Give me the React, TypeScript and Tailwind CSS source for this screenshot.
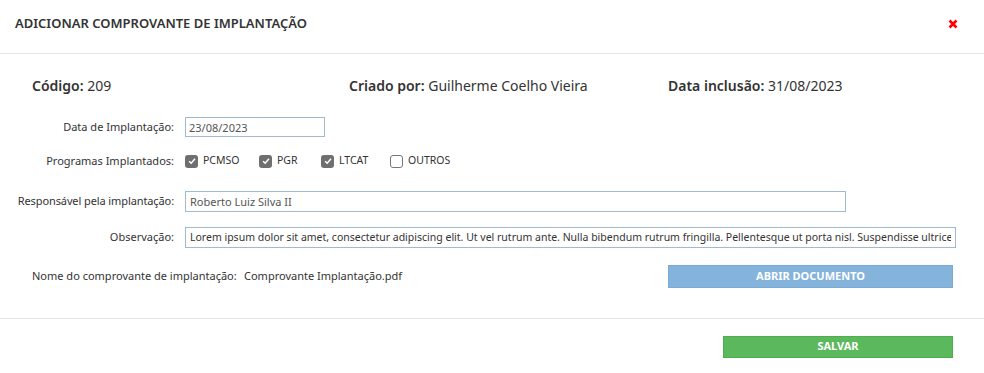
import { useState } from 'react';

const font = { fontFamily: '"Noto Sans", "DejaVu Sans", sans-serif' };

type CheckProps = { label: string; checked: boolean; width: string; onToggle: () => void };

const Check = ({ label, checked, width, onToggle }: CheckProps) => (
  <button type="button" onClick={onToggle} className={`flex items-center gap-[5px] ${width}`}>
    <span
      className={`flex h-[13px] w-[13px] items-center justify-center rounded-[3px] ${
        checked ? 'bg-[#6f6f6f]' : 'border border-[#777] bg-white'
      }`}
    >
      {checked && (
        <svg viewBox="0 0 12 12" className="h-[10px] w-[10px]">
          <path d="M2.5 6.2 L5 8.6 L9.6 3.4" fill="none" stroke="white" strokeWidth="1.8" />
        </svg>
      )}
    </span>
    <span className="text-[10.5px] text-[#333]">{label}</span>
  </button>
);

// fixed slot widths so the boxes line up like the original form
const slots = {
  PCMSO: 'w-[74px]',
  PGR: 'w-[62px]',
  LTCAT: 'w-[69px]',
  OUTROS: 'w-[70px]',
};

const App = () => {
  const [programs, setPrograms] = useState({
    PCMSO: true,
    PGR: true,
    LTCAT: true,
    OUTROS: false,
  });

  const toggle = (key: keyof typeof programs) =>
    setPrograms((p) => ({ ...p, [key]: !p[key] }));

  return (
    <div className="h-[373px] w-[984px] bg-white text-[#333]" style={font}>
      {/* Header */}
      <div className="flex h-[54px] items-start justify-between border-b border-[#e5e5e5] pl-[15px] pr-[26px] pt-[15px]">
        <h1 className="text-[13px] font-semibold leading-[16px] text-[#333]">
          ADICIONAR COMPROVANTE DE IMPLANTAÇÃO
        </h1>
        <button type="button" className="mt-[4px] text-[#f00]">
          <svg viewBox="0 0 10 10" className="h-[10px] w-[10px]">
            <path d="M1.5 1.5 L8.5 8.5 M8.5 1.5 L1.5 8.5" stroke="currentColor" strokeWidth="2.6" />
          </svg>
        </button>
      </div>

      {/* Body */}
      <div className="border-b border-[#e5e5e5] pb-[30px]">
        <div className="flex h-[63px] items-center pl-[32px] text-[14px]">
          <div className="w-[317px]">
            <span className="font-semibold">Código:</span> 209
          </div>
          <div className="w-[319px]">
            <span className="font-semibold">Criado por:</span> Guilherme Coelho Vieira
          </div>
          <div>
            <span className="font-semibold">Data inclusão:</span> 31/08/2023
          </div>
        </div>

        <div className="flex flex-col text-[11px]">
          <div className="flex items-center">
            <label className="w-[175px] pr-[1px] text-right">Data de Implantação:</label>
            <input
              defaultValue="23/08/2023"
              className="ml-[10px] h-[20px] w-[140px] border border-[#9fbad1] px-[3px] text-[11px] text-[#555] outline-none"
            />
          </div>

          <div className="mt-[16px] flex items-center">
            <label className="w-[175px] pr-[1px] text-right">Programas Implantados:</label>
            <div className="ml-[10px] flex items-center">
              {(Object.keys(programs) as (keyof typeof programs)[]).map((key) => (
                <Check
                  key={key}
                  label={key}
                  width={slots[key]}
                  checked={programs[key]}
                  onToggle={() => toggle(key)}
                />
              ))}
            </div>
          </div>

          <div className="mt-[21px] flex items-center">
            <label className="w-[175px] pr-[1px] text-right tracking-[-0.1px]">
              Responsável pela implantação:
            </label>
            <input
              defaultValue="Roberto Luiz Silva II"
              className="ml-[10px] h-[21px] w-[661px] border border-[#9fbad1] px-[4px] text-[11px] text-[#555] outline-none"
            />
          </div>

          <div className="mt-[15px] flex items-center">
            <label className="w-[175px] pr-[1px] text-right">Observação:</label>
            <input
              defaultValue="Lorem ipsum dolor sit amet, consectetur adipiscing elit. Ut vel rutrum ante. Nulla bibendum rutrum fringilla. Pellentesque ut porta nisl. Suspendisse ultrices"
              className="ml-[10px] h-[21px] w-[771px] border border-[#9fbad1] px-[4px] text-[10.5px] text-[#333] outline-none"
            />
          </div>

          <div className="mt-[17px] flex items-center pl-[32px]">
            <span className="w-[212px]">Nome do comprovante de implantação:</span>
            <span className="w-[424px]">Comprovante Implantação.pdf</span>
            <button
              type="button"
              className="h-[23px] w-[285px] border border-[#7aabd6] bg-[#84b3dc] text-[11px] font-bold text-white"
            >
              ABRIR DOCUMENTO
            </button>
          </div>
        </div>
      </div>

      {/* Footer */}
      <div className="flex justify-end pr-[31px] pt-[17px]">
        <button
          type="button"
          className="h-[22px] w-[230px] border border-[#4cae4c] bg-[#5cb85c] text-[11px] font-bold text-white"
        >
          SALVAR
        </button>
      </div>
    </div>
  );
};

export default App;
